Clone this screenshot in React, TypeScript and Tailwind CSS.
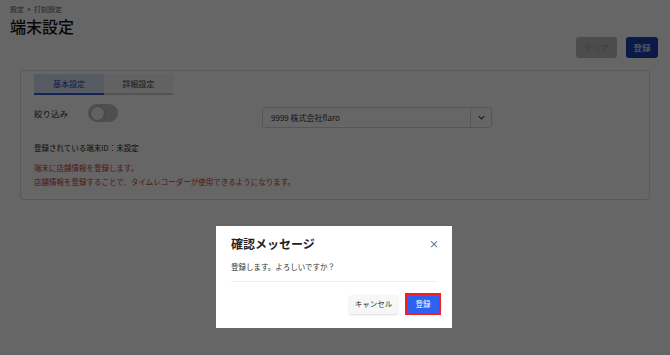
import React from 'react'

export default function App() {
  return (
    <div
      className="relative h-[355px] w-[670px] overflow-hidden bg-[#ffffff] text-[#222]"
      style={{ fontFamily: '"Noto Sans CJK JP", "Noto Sans", sans-serif' }}
    >
      {/* Header */}
      <div className="px-[10px] pt-[5px]">
        <div className="flex items-center gap-[3px] text-[7px] leading-[9px] text-[#555]">
          <span>設定</span>
          <span>&gt;</span>
          <span>打刻設定</span>
        </div>
        <h1 className="mt-[2px] text-[16px] font-medium leading-[20px] text-[#111]">端末設定</h1>
      </div>
      <div className="mt-[1px] flex justify-end gap-[9px] pr-[12px]">
        <button className="h-[21px] w-[41px] rounded-[3px] bg-[#bdbdbd] text-[8.5px] text-[#9a9a9a]">
          クリア
        </button>
        <button className="h-[21px] w-[32px] rounded-[3px] bg-[#1a3fb0] text-[8.5px] text-white">
          登録
        </button>
      </div>

      {/* Card */}
      <div className="mx-[20px] mt-[12px] h-[130px] rounded-[3px] border border-[#dcdcdc] bg-white px-[13px] pt-[3px]">
        <div className="flex">
          <div className="flex h-[21px] w-[70px] items-center justify-center border-b-2 border-[#2d5bd8] bg-[#d6e2f5] text-[8px] text-[#2b4fb5]">
            基本設定
          </div>
          <div className="flex h-[21px] w-[69px] items-center justify-center border-b-2 border-[#cfcfcf] bg-[#f4f4f4] text-[8px] text-[#444]">
            詳細設定
          </div>
        </div>
        <div className="flex items-start">
          <div className="mt-[9px] flex items-center">
            <span className="w-[54px] text-[8.5px] text-[#333]">絞り込み</span>
            <div className="flex h-[18px] w-[30px] items-center rounded-full bg-[#c4c4c4] px-[2px]">
              <div className="h-[15px] w-[15px] rounded-full border border-[#aaa] bg-[#f2f2f2]" />
            </div>
          </div>
          <div className="ml-[144px] mt-[12px] flex h-[21px] w-[230px] items-center rounded-[3px] border border-[#d8d8d8] bg-white">
            <span className="flex-1 pl-[8px] text-[8px] text-[#333]">9999 株式会社flaro</span>
            <div className="flex h-full w-[21px] items-center justify-center border-l border-[#d8d8d8]">
              <svg width="11" height="11" viewBox="0 0 24 24" fill="none" stroke="#444" strokeWidth="2.5">
                <path d="M6 9l6 6 6-6" />
              </svg>
            </div>
          </div>
        </div>
        <p className="mt-[14px] text-[7.5px] leading-[12px] text-[#222]">登録されている端末ID：未設定</p>
        <div className="mt-[7px] text-[7.5px] leading-[14px] text-[#c4403a]">
          <p>端末に店舗情報を登録します。</p>
          <p>店舗情報を登録することで、タイムレコーダーが使用できるようになります。</p>
        </div>
      </div>

      {/* Overlay */}
      <div className="absolute inset-0 flex items-start justify-center bg-black/60 pt-[226px]">
        <div className="ml-[-2px] w-[236px] bg-white px-[15px] pb-[13px] pt-[10px]">
          <div className="flex items-center justify-between">
            <h2 className="text-[12px] font-bold leading-[16px] text-[#222]">確認メッセージ</h2>
            <span className="mr-[-2px] text-[10px] leading-[10px] text-[#444]">×</span>
          </div>
          <p className="mt-[9px] text-[7.5px] leading-[12px] text-[#333]">登録します。よろしいですか？</p>
          <div className="mt-[8px] border-t border-[#eee]" />
          <div className="mr-[-4px] mt-[11px] flex items-center justify-end gap-[7px]">
            <button className="h-[19px] w-[49px] rounded-[3px] bg-[#f7f7f7] text-[7.5px] text-[#333] shadow-[0_1px_2px_rgba(0,0,0,0.15)]">
              キャンセル
            </button>
            <div className="border-2 border-[#ff1a1a]">
              <button className="block h-[18px] w-[32px] bg-[#2d62f0] text-[7.5px] text-white">登録</button>
            </div>
          </div>
        </div>
      </div>
    </div>
  )
}
